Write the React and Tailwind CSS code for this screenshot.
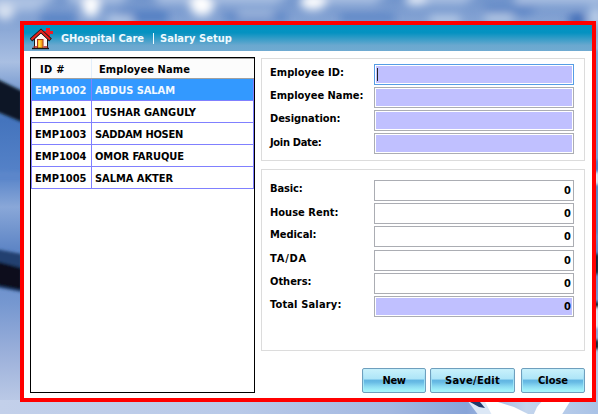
import { useLayoutEffect, useRef, useState } from "react";

// Spreads the letters of a label so that it fills the given width.
function Label({ children, w, className = "" }) {
  const ref = useRef(null);
  const [spacing, setSpacing] = useState(0);
  useLayoutEffect(() => {
    const natural = ref.current.getBoundingClientRect().width;
    setSpacing((w - natural) / children.length);
  }, []);
  return (
    <span ref={ref} className={`inline-block whitespace-pre ${className}`} style={{ letterSpacing: `${spacing}px` }}>
      {children}
    </span>
  );
}

const employees = [
  ["EMP1002", "ABDUS SALAM", 80],
  ["EMP1001", "TUSHAR GANGULY", 101],
  ["EMP1003", "SADDAM HOSEN", 88],
  ["EMP1004", "OMOR FARUQUE", 89],
  ["EMP1005", "SALMA AKTER", 78],
];

function Field({ label, w, filled, value, focused, row = "mb-0.5", text = "pt-[2px]" }) {
  return (
    <div className={`flex h-[21px] ${row}`}>
      <div className={`w-[104px] shrink-0 leading-[14px] ${text}`}>
        <Label w={w}>{label}</Label>
      </div>
      <div className={`h-[21px] w-[200px] border bg-white p-px ${focused ? "border-[#569de5]" : "border-[#abadb3]"}`}>
        <div className={`flex h-full justify-end pr-px pt-[2px] leading-[14px] ${filled ? "bg-[#c0c0ff]" : "bg-white"}`}>
          {focused && <span className="mr-auto ml-px h-[13px] w-px bg-[#222]" />}
          {value}
        </div>
      </div>
    </div>
  );
}

function Button({ label, w, size }) {
  return (
    <button
      className={`flex h-[25px] items-center justify-center rounded-[2px] border border-[#6f9fbd] bg-linear-to-b from-[#c5f0fc] from-0% via-[#9bdcf5] via-45% to-[#a8f5fc] p-px ${size}`}
    >
      <span className="flex h-full w-full items-start justify-center bg-[linear-gradient(180deg,#c6f0fb_0%,#aee5f8_42%,#62b6e2_49%,#68bbe5_58%,#8bdaf2_78%,#a6f5fb_100%)] pt-1 leading-[14px]">
        <Label w={w}>{label}</Label>
      </span>
    </button>
  );
}

function HouseLogo() {
  return (
    <svg width="26" height="24" viewBox="0 0 26 24" className="block">
      <path d="M16 1h4v3h3v3h-3v2.5h-4V7h-2V4h2z" fill="#ee1c24" />
      <path d="M4.5 11.5L11 5l6.5 6.5V21.500h-13z" fill="#fff" stroke="#171717" />
      <path d="M1 13L11 4l9.500 9" fill="none" stroke="#171717" strokeWidth="3.800" />
      <path d="M1.500 12.500L11 4l9 8.500" fill="none" stroke="#e5221d" strokeWidth="2.200" />
      <path d="M11 7l6 5.500v7H5v-7z" fill="#fff8f2" />
      <path d="M7 12h6.500v9H7z" fill="#a8341c" />
      <path d="M8 13h4.500v8H8z" fill="#f5a414" />
      <path d="M8.500 13.500h2V20h-2z" fill="#ffdc45" />
      <path d="M2 21.500h17" stroke="#171717" strokeWidth="1.400" />
      <path d="M3.500 20h3.500M13.500 20h4" stroke="#b42820" strokeWidth="1.400" />
    </svg>
  );
}

// Out-of-focus keyboard behind the window.
function Backdrop() {
  return (
    <svg className="absolute inset-0" width="598" height="414" viewBox="0 0 598 414">
      <defs>
        <linearGradient id="sky" x1="0" y1="0" x2="0" y2="1">
          <stop offset="0" stopColor="#7295cc" />
          <stop offset="0.15" stopColor="#a9bfe2" />
          <stop offset="0.29" stopColor="#4474bd" />
          <stop offset="0.42" stopColor="#5582c8" />
          <stop offset="0.5" stopColor="#89a7d8" />
          <stop offset="0.6" stopColor="#5f86c6" />
          <stop offset="0.73" stopColor="#7597d0" />
          <stop offset="0.85" stopColor="#9aafda" />
          <stop offset="1" stopColor="#c3d0e9" />
        </linearGradient>
        <linearGradient id="desk" x1="0" y1="0" x2="1" y2="0">
          <stop offset="0" stopColor="#c3d0ea" />
          <stop offset="0.4" stopColor="#b8c9e8" />
          <stop offset="0.65" stopColor="#a3b8e1" />
          <stop offset="0.78" stopColor="#87a4d8" />
          <stop offset="0.88" stopColor="#c3d5ed" />
          <stop offset="1" stopColor="#a9c2e6" />
        </linearGradient>
        <filter id="soft" x="-50%" y="-50%" width="200%" height="200%"><feGaussianBlur stdDeviation="5" /></filter>
        <filter id="edge" x="-50%" y="-50%" width="200%" height="200%"><feGaussianBlur stdDeviation="1.5" /></filter>
        <filter id="fine"><feGaussianBlur stdDeviation="0.7" /></filter>
      </defs>
      <rect width="598" height="414" fill="url(#sky)" />
      <rect y="400" width="598" height="14" fill="url(#desk)" />
      <g filter="url(#soft)">
        <path d="M-10 -6H60L35 12H-10zM65 -8h70l-16 12H70zM150 -8h60l-10 12h-40zM215 -8h80l-20 12h-60zM320 -8h70l-16 12h-50zM410 -8h70l-16 12h-50zM515 -8h90v12h-90z" fill="#adc2e3" />
        <ellipse cx="5" cy="12" rx="9" ry="8" fill="#dbe4f2" />
        <ellipse cx="91" cy="6" rx="9" ry="11" fill="#fff" />
        <ellipse cx="202" cy="5" rx="12" ry="11" fill="#fff" />
        <ellipse cx="313" cy="2" rx="13" ry="8" fill="#fff" />
        <ellipse cx="416" cy="0" rx="11" ry="5" fill="#eef3fa" />
        <path d="M40 14h36v10H40zM118 10h50v13h-50zM225 14h62v7h-62zM340 14h55v7h-55zM485 6h55l-12 8h-43z" fill="#527fc3" />
        <path d="M108 16h25v8h-25zM238 12h35v4h-35zM485 14h28v8h-28zM430 16h30v8h-30zM590 8h12v18h-12z" fill="#bed0e9" />
        <ellipse cx="577" cy="20" rx="9" ry="6" fill="#3765b2" />
      </g>
      <g filter="url(#edge)">
        <path d="M-5 78L22 91V122L-5 111z" fill="#0d1728" />
        <path d="M-5 171L22 172V180H-5z" fill="#5b86ca" />
        <path d="M-5 249L22 254V292L-5 287z" fill="#21406f" />
        <path d="M-5 261L22 268V290L-5 285z" fill="#0b101d" />
        <path d="M594 50h5v110h-5z" fill="#79a4d8" />
        <path d="M594 172h5v12h-5z" fill="#e8f2fa" />
        <path d="M594 184h5v50h-5z" fill="#5687c3" />
        <path d="M594 254h5v20h-5z" fill="#101c31" />
        <path d="M594 308h5v20h-5z" fill="#e5edf5" />
        <path d="M594 340h5v10h-5zM594 302h5v6h-5z" fill="#111b2c" />
        <path d="M594 350h5v40h-5z" fill="#b7cbe6" />
      </g>
      <g filter="url(#fine)">
        <path d="M467 400h22l12 16h-22z" fill="#dce8f6" />
        <path d="M484 400l14 2 16 5 16 8h-38z" fill="#fff" />
        <path d="M543 400h28l-10 16h-28l4-9z" fill="#fff" />
        <path d="M470 402h10l5 6-6-1z" fill="#203b6b" />
      </g>
    </svg>
  );
}

export default function App() {
  return (
    <div className="relative h-[414px] w-[598px] overflow-hidden font-['DejaVu_Sans_Condensed','DejaVu_Sans',sans-serif] text-[11px] font-bold text-black [font-stretch:condensed]">
      <Backdrop />
      <div className="relative pl-5 pt-[21px]">
        <div className="h-[381px] w-[576px] border-4 border-[#ff0000] bg-white">
          <header className="flex h-[26px] bg-[linear-gradient(180deg,#0093c2_0%,#0592c1_30%,#6aa8cf_78%,#70abd2_100%)] pl-[6px] text-[#eefaff]">
            <div className="w-[31px] shrink-0 pt-[2px]"><HouseLogo /></div>
            <div className="flex pt-[7px] leading-[14px]">
              <Label w={83} className="mr-[9px]">GHospital Care</Label>
              <span className="mr-[6px] mt-px h-[11px] w-px bg-[#eefaff]" />
              <Label w={72}>Salary Setup</Label>
            </div>
          </header>

          <div className="flex pl-[6px] pt-[6px]">
            <section className="h-[336px] w-[225px] shrink-0 border border-black">
              <div className="flex h-[21px] border-b border-t border-b-[#a0a0a0] border-t-[#a0a0a0] bg-[#fcfcfc] leading-[14px]">
                <div className="w-[61px] border-r border-[#e3eefa] pl-[9px] pt-1"><Label w={25}>ID #</Label></div>
                <div className="pl-[7px] pt-1"><Label w={91}>Employee Name</Label></div>
              </div>
              {employees.map(([id, name, w], i) => (
                <div
                  key={id}
                  className={`flex h-[22px] border-b border-l border-r border-[#8080ff] leading-[14px] ${i === 0 ? "bg-[#3399ff] text-[#f1f8ff]" : ""}`}
                >
                  <div className="w-[60px] border-r border-[#8080ff] pl-[3px] pt-[5px]"><Label w={51.5}>{id}</Label></div>
                  <div className="pl-[3px] pt-[5px]"><Label w={w}>{name}</Label></div>
                </div>
              ))}
            </section>

            <section className="ml-[6px] w-[324px] pt-px">
              <div className="h-[103px] border border-[#dcdcdc] pl-2 pt-[5px]">
                <Field label="Employee ID:" w={74} filled focused />
                <Field label="Employee Name:" w={93.5} filled />
                <Field label="Designation:" w={70.5} filled />
                <Field label="Join Date:" w={51.5} filled text="pt-[3px]" />
              </div>
              <div className="mt-2 h-[182px] border border-[#dcdcdc] pl-2 pt-[10px]">
                <Field label="Basic:" w={32.5} value="0" />
                <Field label="House Rent:" w={68.5} value="0" text="pt-[3px]" />
                <Field label="Medical:" w={46.5} value="0" row="mb-[3px]" />
                <Field label="TA/DA" w={37} value="0" />
                <Field label="Others:" w={41.5} value="0" />
                <Field label="Total Salary:" w={71.5} value="0" filled />
              </div>
              <div className="mt-[17px] flex pl-[101px]">
                <Button label="New" w={23} size="w-[64px]" />
                <Button label="Save/Edit" w={55} size="ml-1 w-[85px]" />
                <Button label="Close" w={30} size="ml-[6px] w-[64px]" />
              </div>
            </section>
          </div>
        </div>
      </div>
    </div>
  );
}
